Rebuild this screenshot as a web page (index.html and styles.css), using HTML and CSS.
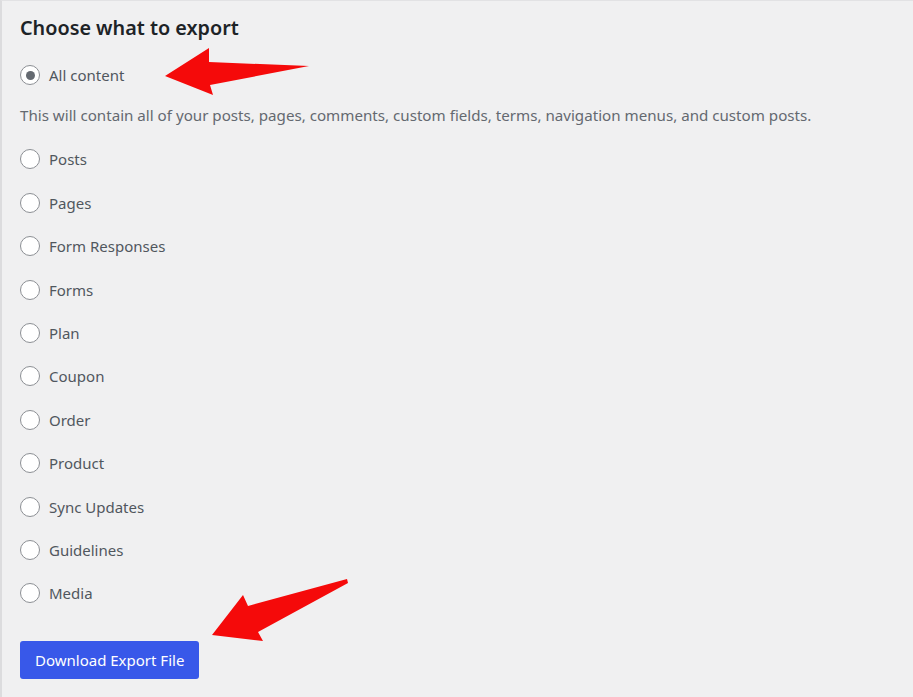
FILE: index.html
```html
<!DOCTYPE html>
<html lang="en">
<head>
    <meta charset="UTF-8">
    <meta name="viewport" content="width=device-width, initial-scale=1.0">
    <title>Export</title>
    <link rel="stylesheet" href="styles.css">
</head>
<body>
    <div class="export-box">
        <h2>Choose what to export</h2>
        <form id="exportForm" class="export-form">
            <label class="choice"><input type="radio" name="content" value="all" checked> All content</label>
            <p class="hint">This will contain all of your posts, pages, comments, custom fields, terms, navigation menus, and custom posts.</p>
            <label class="choice"><input type="radio" name="content" value="posts"> Posts</label>
            <label class="choice"><input type="radio" name="content" value="pages"> Pages</label>
            <label class="choice"><input type="radio" name="content" value="responses"> Form Responses</label>
            <label class="choice"><input type="radio" name="content" value="forms"> Forms</label>
            <label class="choice"><input type="radio" name="content" value="plan"> Plan</label>
            <label class="choice"><input type="radio" name="content" value="coupon"> Coupon</label>
            <label class="choice"><input type="radio" name="content" value="order"> Order</label>
            <label class="choice"><input type="radio" name="content" value="product"> Product</label>
            <label class="choice"><input type="radio" name="content" value="sync"> Sync Updates</label>
            <label class="choice"><input type="radio" name="content" value="guidelines"> Guidelines</label>
            <label class="choice"><input type="radio" name="content" value="media"> Media</label>
            <div class="actions">
                <button type="submit">Download Export File</button>
            </div>
        </form>

        <!-- callout arrows -->
        <svg class="arrow" width="913" height="697" viewBox="0 0 913 697">
            <polygon points="165,76 209,48 209,62 309,66 210,85 213,95" fill="#f50a0a"/>
            <polygon points="212,635 243,595 248,606 347,579 348,583 258,632 263,641" fill="#f50a0a"/>
        </svg>
    </div>
</body>
</html>
```

FILE: styles.css
```css
* {
    box-sizing: border-box;
    margin: 0;
    padding: 0;
}

body {
    font-family: "Noto Sans", "Open Sans", sans-serif;
    background-color: #f0f0f1;
    color: #50575e;
}

.export-box {
    position: relative;
    width: 913px;
    height: 697px;
    padding: 14px 20px 0;
    border-left: 2px solid #dcdcde;
    border-top: 1px solid #e2e2e4;
}

.export-box h2 {
    font-size: 19.8px;
    font-weight: 600;
    color: #1d2327;
    line-height: 26px;
    margin-left: -2px;
}

.export-form {
    display: flex;
    flex-direction: column;
    margin-top: 22px;
    margin-left: -2px;
}

.choice {
    display: flex;
    align-items: center;
    gap: 9px;
    height: 24px;
    font-size: 15px;
    margin-bottom: 19.4px;
    cursor: pointer;
}

.choice input {
    appearance: none;
    -webkit-appearance: none;
    width: 20px;
    height: 20px;
    border: 1px solid #8c8f94;
    border-radius: 50%;
    background-color: #fff;
    display: flex;
    align-items: center;
    justify-content: center;
}

.choice input:checked::before {
    content: "";
    width: 9px;
    height: 9px;
    border-radius: 50%;
    background-color: #646970;
}

.hint {
    font-size: 15.15px;
    color: #646970;
    line-height: 20px;
    margin-top: -1px;
    margin-bottom: 22px;
}

.actions {
    margin-top: 16px;
}

button {
    font-family: inherit;
    font-size: 15px;
    background-color: #3858e9;
    color: #fff;
    border: none;
    border-radius: 3px;
    height: 38px;
    padding: 0 15px;
    cursor: pointer;
}

button:hover {
    background-color: #2145e6;
}

.arrow {
    position: absolute;
    left: -2px;
    top: -1px;
    pointer-events: none;
}
```
